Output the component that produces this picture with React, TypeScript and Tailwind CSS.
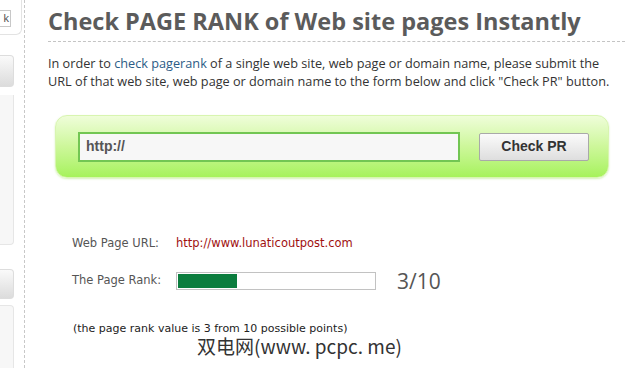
import React from "react";

export default function App() {
  return (
    <div className="w-[640px] h-[368px] overflow-hidden bg-white flex">
      {/* left sidebar fragment */}
      <div className="w-[24px] shrink-0 relative flex flex-col">
        <div className="h-[35px] w-[22px] border border-l-0 border-t-0 border-[#e3e3e3] rounded-br-[6px] flex items-start pt-[10px]">
          <div className="h-[17px] w-[11px] border border-l-0 border-[#c8c8c8] bg-white flex items-center justify-end pr-[1px] text-[11px] text-[#555] font-['Liberation_Sans',sans-serif] leading-none">
            k
          </div>
        </div>
        <div className="mt-[20px] h-[32px] w-[14px] rounded-r-[4px] border border-l-0 border-[#ddd] bg-gradient-to-b from-[#fafafa] to-[#dcdcdc]" />
        <div className="mt-[8px] h-[150px] w-[14px] border-r border-b border-[#e6e6e6] rounded-br-[4px] bg-[#f7f7f7]" />
        <div className="mt-[24px] h-[30px] w-[14px] rounded-r-[4px] border border-l-0 border-[#ddd] bg-gradient-to-b from-[#fafafa] to-[#dcdcdc]" />
        <div className="mt-[6px] flex-1 w-[14px] border-r border-t border-[#e6e6e6] rounded-tr-[4px] bg-[#f7f7f7]" />
        <div className="absolute left-[24px] top-0 bottom-0 border-l border-dashed border-[#c8c8c8]" />
      </div>

      {/* main */}
      <div className="flex-1 pl-[24px] pr-[15px] font-['Open_Sans','Liberation_Sans',sans-serif]">
        <h1 className="mt-[6px] text-[23.5px] leading-[30px] font-bold text-[#5b5b5b] whitespace-nowrap">
          Check PAGE RANK of Web site pages Instantly
        </h1>
        <div className="mt-[5px] border-t border-dashed border-[#c4c4c4]" />
        <p className="mt-[12px] text-[12.7px] leading-[18px] text-[#333] whitespace-nowrap">
          In order to <span className="text-[#2c5c86]">check pagerank</span> of a single web site, web page or domain name, please submit the
          <br />
          URL of that web site, web page or domain name to the form below and click "Check PR" button.
        </p>

        <div className="mt-[25px] ml-[7px] w-[554px] h-[63px] rounded-[12px] border border-[#d8f5b0] bg-gradient-to-b from-[#effdd9] via-[#cdf79a] to-[#a6f25a] shadow-[0_1px_2px_rgba(150,220,80,0.4)] flex items-center pl-[22px]">
          <div className="w-[382px] h-[30px] border-2 border-[#72c653] bg-[#f7f7f7] flex items-center pl-[6px] font-['Liberation_Sans',sans-serif] font-bold text-[14px] text-[#555]">
            http://
          </div>
          <div className="ml-[19px] w-[110px] h-[28px] border border-[#a9a9a9] rounded-[2px] bg-gradient-to-b from-[#fbfbfb] to-[#dedede] flex items-center justify-center font-['Liberation_Sans',sans-serif] font-bold text-[14px] text-[#333]">
            Check PR
          </div>
        </div>

        <div className="mt-[57px] ml-[24px] text-[11.5px] font-['DejaVu_Sans',sans-serif]">
          <div className="flex items-center h-[18px]">
            <span className="w-[104px] text-[#555]">Web Page URL:</span>
            <span className="text-[#a01010]">http://www.lunaticoutpost.com</span>
          </div>
          <div className="mt-[19px] flex items-center h-[18px]">
            <span className="w-[104px] text-[#555]">The Page Rank:</span>
            <div className="w-[200px] h-[18px] border border-[#c2c2c2] bg-white p-[1px]">
              <div className="h-full bg-[#0b7d3e]" style={{ width: "30%" }} />
            </div>
            <span className="ml-[21px] text-[21px] text-[#555] font-['Open_Sans',sans-serif] leading-none">3/10</span>
          </div>
          <div className="mt-[32px] ml-[1px] text-[11px] leading-[14px] text-[#222]">(the page rank value is 3 from 10 possible points)</div>
        </div>
        <div className="ml-[149px] mt-[0px] text-[19px] leading-[20px] text-[#333] font-['Noto_Sans_CJK_SC',sans-serif]">
          双电网(www. pcpc. me)
        </div>
      </div>
    </div>
  );
}
